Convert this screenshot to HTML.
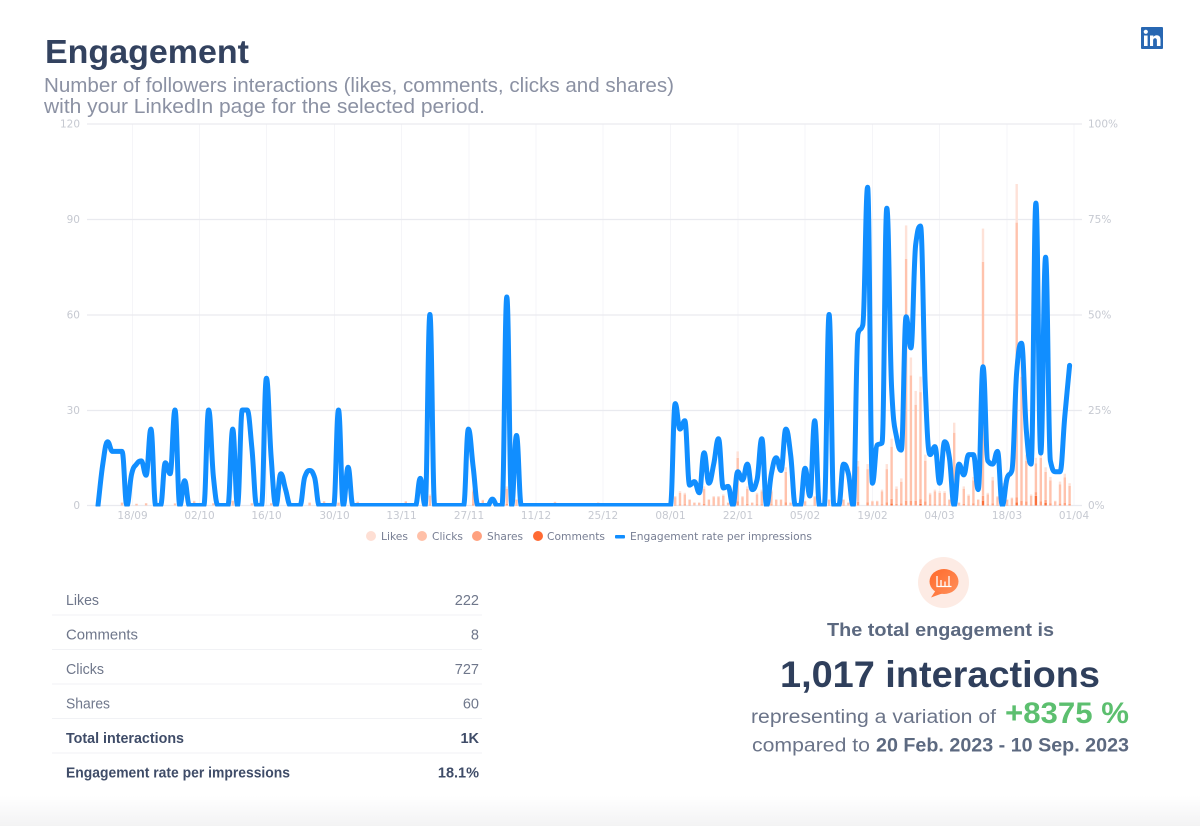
<!DOCTYPE html>
<html lang="en">
<head>
<meta charset="utf-8">
<title>Engagement</title>
<style>
html,body{margin:0;padding:0;background:#fff}
body{width:1200px;height:826px;overflow:hidden;position:relative}
svg{position:absolute;left:0;top:0;display:block}
text{font-family:"Liberation Sans",sans-serif}
.ax{font-family:"DejaVu Sans",sans-serif;font-size:10.5px;fill:#c6c9d1}
.lg{font-family:"DejaVu Sans",sans-serif;font-size:10.5px;fill:#777e93}
.row{font-size:14.5px;fill:#6f778b}
.b{font-size:14.5px;font-weight:700;fill:#3f4c68}
</style>
</head>
<body>
<svg width="1200" height="826" viewBox="0 0 1200 826" xmlns="http://www.w3.org/2000/svg">
<defs>
<linearGradient id="bot" x1="0" y1="0" x2="0" y2="1"><stop offset="0" stop-color="#fff"/><stop offset="1" stop-color="#f3f3f4"/></linearGradient>
<linearGradient id="bub" x1="0" y1="0" x2="1" y2="1"><stop offset="0" stop-color="#ff6a2b"/><stop offset="1" stop-color="#ff8f5a"/></linearGradient>
<clipPath id="plot"><rect x="80" y="120" width="1010" height="386.500"/></clipPath>
</defs>
<rect width="1200" height="826" fill="#fff"/>
<rect y="796" width="1200" height="30" fill="url(#bot)"/>

<text x="45" y="63" font-size="33" font-weight="700" fill="#33425f" textLength="204" lengthAdjust="spacingAndGlyphs">Engagement</text>
<text x="44" y="92" font-size="20" fill="#8b91a3" textLength="630" lengthAdjust="spacingAndGlyphs">Number of followers interactions (likes, comments, clicks and shares)</text>
<text x="44" y="113" font-size="20" fill="#8b91a3" textLength="441" lengthAdjust="spacingAndGlyphs">with your LinkedIn page for the selected period.</text>

<rect x="1141" y="27" width="22" height="22" rx="1" fill="#2867b2"/>
<rect x="1144" y="35.500" width="3.600" height="10.500" fill="#fff"/>
<circle cx="1145.800" cy="31.800" r="2.100" fill="#fff"/>
<path d="M1150 35.500h3.400v1.500c.7-1.100 1.900-1.800 3.300-1.800 2.800 0 3.800 1.800 3.800 4.600V46h-3.600v-5.100c0-1.400-.4-2.600-1.800-2.600s-2 1.100-2 2.600V46H1150z" fill="#fff"/>

<g stroke="#f5f5f8" stroke-width="1">
<path d="M132.500 124V505M199.500 124V505M266.500 124V505M334.500 124V505M401.500 124V505M469 124V505M536 124V505M603 124V505M670.500 124V505M738 124V505M805 124V505M872.500 124V505M939.500 124V505M1007 124V505M1074 124V505"/>
</g>
<g stroke="#e9eaef" stroke-width="1.200">
<path d="M87 124H1082M87 219.500H1082M87 315H1082M87 410.500H1082M87 505.500H1082"/>
</g>

<g id="bars"></g>
<g clip-path="url(#plot)"><path id="line" fill="none" stroke="#118eff" stroke-width="5" stroke-linecap="round" stroke-linejoin="round"/></g>

<g class="ax" text-anchor="end">
<text class="ax" x="80" y="127.500">120</text>
<text class="ax" x="80" y="223">90</text>
<text class="ax" x="80" y="318.500">60</text>
<text class="ax" x="80" y="414">30</text>
<text class="ax" x="80" y="509">0</text>
</g>
<g>
<text class="ax" x="1088" y="127.500">100%</text>
<text class="ax" x="1088" y="223">75%</text>
<text class="ax" x="1088" y="318.500">50%</text>
<text class="ax" x="1088" y="414">25%</text>
<text class="ax" x="1088" y="509">0%</text>
</g>
<g text-anchor="middle">
<text class="ax" text-anchor="middle" x="132.500" y="519">18/09</text>
<text class="ax" text-anchor="middle" x="199.500" y="519">02/10</text>
<text class="ax" text-anchor="middle" x="266.500" y="519">16/10</text>
<text class="ax" text-anchor="middle" x="334.500" y="519">30/10</text>
<text class="ax" text-anchor="middle" x="401.500" y="519">13/11</text>
<text class="ax" text-anchor="middle" x="469" y="519">27/11</text>
<text class="ax" text-anchor="middle" x="536" y="519">11/12</text>
<text class="ax" text-anchor="middle" x="603" y="519">25/12</text>
<text class="ax" text-anchor="middle" x="670.500" y="519">08/01</text>
<text class="ax" text-anchor="middle" x="738" y="519">22/01</text>
<text class="ax" text-anchor="middle" x="805" y="519">05/02</text>
<text class="ax" text-anchor="middle" x="872.500" y="519">19/02</text>
<text class="ax" text-anchor="middle" x="939.500" y="519">04/03</text>
<text class="ax" text-anchor="middle" x="1007" y="519">18/03</text>
<text class="ax" text-anchor="middle" x="1074" y="519">01/04</text>
</g>

<circle cx="371" cy="536" r="5" fill="#fedfd4"/>
<text class="lg" x="381" y="540" textLength="27" lengthAdjust="spacingAndGlyphs">Likes</text>
<circle cx="422" cy="536" r="5" fill="#ffc0a8"/>
<text class="lg" x="432" y="540" textLength="31" lengthAdjust="spacingAndGlyphs">Clicks</text>
<circle cx="477" cy="536" r="5" fill="#ffa17f"/>
<text class="lg" x="487" y="540" textLength="36" lengthAdjust="spacingAndGlyphs">Shares</text>
<circle cx="538" cy="536" r="5" fill="#ff6a33"/>
<text class="lg" x="547" y="540" textLength="58" lengthAdjust="spacingAndGlyphs">Comments</text>
<rect x="615" y="535" width="10" height="3.500" rx="1" fill="#118eff"/>
<text class="lg" x="630" y="540" textLength="182" lengthAdjust="spacingAndGlyphs">Engagement rate per impressions</text>

<g stroke="#f1f2f5" stroke-width="1">
<path d="M52 615H482M52 649.500H482M52 684H482M52 718.500H482M52 753H482"/>
</g>
<text class="row" x="66" y="605" textLength="33" lengthAdjust="spacingAndGlyphs">Likes</text>
<text class="row" x="479" y="605" text-anchor="end">222</text>
<text class="row" x="66" y="639.500" textLength="72" lengthAdjust="spacingAndGlyphs">Comments</text>
<text class="row" x="479" y="639.500" text-anchor="end">8</text>
<text class="row" x="66" y="674" textLength="38" lengthAdjust="spacingAndGlyphs">Clicks</text>
<text class="row" x="479" y="674" text-anchor="end">727</text>
<text class="row" x="66" y="708.500" textLength="44" lengthAdjust="spacingAndGlyphs">Shares</text>
<text class="row" x="479" y="708.500" text-anchor="end">60</text>
<text class="b" x="66" y="743" textLength="118" lengthAdjust="spacingAndGlyphs">Total interactions</text>
<text class="b" x="479" y="743" text-anchor="end">1K</text>
<text class="b" x="66" y="777.500" textLength="224" lengthAdjust="spacingAndGlyphs">Engagement rate per impressions</text>
<text class="b" x="479" y="777.500" text-anchor="end">18.1%</text>

<circle cx="943.500" cy="582.500" r="25.500" fill="#fdebe4"/>
<ellipse cx="944" cy="581.500" rx="14.500" ry="12.500" fill="url(#bub)"/>
<path d="M936 590L931 597.500L942 593.500Z" fill="#ff7a41"/>
<path d="M937 576V586.500H951.500M941 580V586M945 581.500V586M949 576V586" fill="none" stroke="#fff" stroke-width="1.300"/>

<text x="827" y="636" font-size="18.500" font-weight="700" fill="#5c6980" textLength="227" lengthAdjust="spacingAndGlyphs">The total engagement is</text>
<text x="780" y="687" font-size="37" font-weight="700" fill="#2f3f5c" textLength="320" lengthAdjust="spacingAndGlyphs">1,017 interactions</text>
<text x="751" y="723" font-size="19" fill="#6b7489" textLength="245" lengthAdjust="spacingAndGlyphs">representing a variation of</text>
<text x="1005" y="723" font-size="30" font-weight="700" fill="#5cbf6f" textLength="124" lengthAdjust="spacingAndGlyphs">+8375 %</text>
<text x="752" y="751.500" font-size="19" fill="#6b7489" textLength="118" lengthAdjust="spacingAndGlyphs">compared to</text>
<text x="876" y="751.500" font-size="19" font-weight="700" fill="#5c6980" textLength="253" lengthAdjust="spacingAndGlyphs">20 Feb. 2023 - 10 Sep. 2023</text>
</svg>
<script>
(function(){
var L={1:13,2:20,3:17,4:17,5:17,7:10,8:13,9:14,10:9.5,11:24,14:13.4,15:10,16:30,18:7.8,23:30,24:9,28:24,30:30,31:30,32:18,35:40,36:15,38:10,39:5,43:9,44:11,45:9,50:30,52:12,67:8.5,69:60,77:24,78:12,82:2,85:65.5,87:22,120:32,121:24,122:26.6,123:6.4,124:7.5,125:4,126:16.6,127:7,128:13,129:21,130:5.5,131:6,133:10.6,134:8,135:13,136:5,137:8,138:21,140:10,141:15,142:11,143:24,144:16,147:11.7,148:3,149:26.6,152:60,155:13,156:10,158:54,159:56.7,160:100,161:7,162:19,163:19.6,164:93.4,165:37,166:21.6,167:17.4,168:59.3,169:49.5,170:82,171:87.8,172:37,173:16,174:18.5,175:7,176:20,177:15,179:13,180:9.6,181:16,182:16,183:5,184:43.6,185:14,186:13,187:17,189:8.6,190:11,191:42,192:51,193:23.7,194:13,195:95,196:16.5,197:78,198:14,199:10.6,200:10.6,201:28,202:44};
var B={5:1,8:.6,10:.8,13:1,16:.7,20:1.5,24:.8,28:1.6,32:.8,36:.8,44:1,47:1.4,50:1,54:1.3,60:.8,64:1.4,72:.6,80:1.8,86:1.5,95:1.2,98:.7,104:1,69:3.5,78:5,84:2,85:6,87:2,
119:1,120:3,121:4.5,122:4,123:2,124:1,125:1,126:6,127:2,128:3,129:3,130:3.5,131:1,133:17,134:3,135:6,136:1,137:4,138:5,139:2,140:5,141:2,142:2,143:12,144:1,145:1,146:1,147:1.5,149:3,150:1,152:2,153:1,155:2,156:1,158:14,160:13,161:1.5,162:1.5,163:5,164:13,165:21,166:6,167:8.5,168:88,169:46.5,170:36,171:40.5,172:16,173:4,174:5,175:4.5,176:4.5,177:2,178:26,179:1,180:6,181:3.5,182:9,183:2,184:87,185:4,186:9,187:3,188:7,189:2,190:2.5,191:101,192:46,193:16,194:3.5,195:15,196:17,197:12,198:9,199:1.5,200:7.5,201:10,202:7};
var C={165:.6,171:.5,178:1.2,184:1.5,191:1,195:3,197:.8};
var k=3.183,y0=505.5,x0=98,dx=4.81,n=203;
var xs=[],ys=[],i;
for(i=0;i<n;i++){xs.push(x0+dx*i);ys.push(y0-(L[i]||0)*k);}
var s=[];
for(i=0;i<n-1;i++)s.push((ys[i+1]-ys[i])/dx);
var m=[s[0]];
for(i=1;i<n-1;i++){
  if(s[i-1]*s[i]<=0)m.push(0);
  else{var a=Math.abs(s[i-1]),b=Math.abs(s[i]);m.push((s[i]>0?1:-1)*Math.min(2*a,2*b,(a+b)/2));}
}
m.push(s[n-2]);
var d="M"+xs[0].toFixed(1)+" "+ys[0].toFixed(1),h=dx*0.42;
for(i=0;i<n-1;i++){
  d+="C"+(xs[i]+h).toFixed(1)+" "+(ys[i]+m[i]*h).toFixed(1)+" "+(xs[i+1]-h).toFixed(1)+" "+(ys[i+1]-m[i+1]*h).toFixed(1)+" "+xs[i+1].toFixed(1)+" "+ys[i+1].toFixed(1);
}
document.getElementById("line").setAttribute("d",d);
var g=document.getElementById("bars"),NS="http://www.w3.org/2000/svg";
function r(x,v0,v,c){
  var e=document.createElementNS(NS,"rect");
  e.setAttribute("x",(x-1.2).toFixed(1));
  e.setAttribute("width","2.4");
  e.setAttribute("y",(y0-(v0+v)*k).toFixed(1));
  e.setAttribute("height",(v*k).toFixed(1));
  e.setAttribute("fill",c);
  g.appendChild(e);
}
for(var key in B){
  var t=B[key],x=x0+dx*key,c=C[key]||0,sh=Math.min(t*.08,1.5),lk=t*.12,cl=t-c-sh-lk;
  if(cl<0)cl=0;
  if(c)r(x,0,c,"#f9703c");
  r(x,c,sh,"#ffa27f");
  r(x,c+sh,cl,"#ffc3ad");
  r(x,c+sh+cl,lk,"#fee2d8");
}
})();
</script>
</body>
</html>
